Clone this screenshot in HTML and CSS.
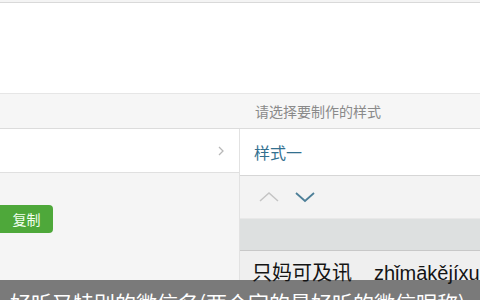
FILE: index.html
```html
<!DOCTYPE html>
<html lang="zh">
<head>
<meta charset="utf-8">
<link rel="stylesheet" href="styles.css">
</head>
<body>
<div class="page">
  <div class="topstrip"></div>
  <div class="blank"></div>
  <div class="bar">
    <div class="bar-left"></div>
    <div class="bar-right">请选择要制作的样式</div>
  </div>
  <div class="cols">
    <div class="col-left">
      <div class="row-select">
        <svg class="chev" width="8" height="12" viewBox="0 0 8 12"><path d="M2 2 L6 6 L2 10" fill="none" stroke="#b8b8b8" stroke-width="1.3"/></svg>
      </div>
      <div class="left-body">
        <button class="copy">复制</button>
      </div>
    </div>
    <div class="col-right">
      <div class="row-style">样式一</div>
      <div class="row-arrows">
        <svg width="20" height="12" viewBox="0 0 20 12"><path d="M1 10 L10 2 L19 10" fill="none" stroke="#c4c4c4" stroke-width="1.5"/></svg>
        <svg width="20" height="12" viewBox="0 0 20 12"><path d="M1 2 L10 10 L19 2" fill="none" stroke="#4d7f98" stroke-width="1.8"/></svg>
      </div>
      <div class="row-band"></div>
      <div class="row-light"></div>
    </div>
  </div>
  <div class="caption">好听又特别的微信名(两个字的最好听的微信昵称)</div>
  <div class="watermark">只妈可及讯<span class="pinyin">zhǐmākějíxun</span></div>
</div>
</body>
</html>
```

FILE: styles.css
```css
html, body {
  margin: 0;
  padding: 0;
}
body {
  font-family: "Noto Sans CJK SC", "Noto Sans", sans-serif;
  background: #fff;
}
.page {
  position: relative;
  width: 480px;
  height: 300px;
  overflow: hidden;
  display: flex;
  flex-direction: column;
}
.topstrip {
  height: 2px;
  background: #f4f4f4;
  border-bottom: 1px solid #d9d9d9;
  flex: none;
}
.blank {
  height: 90px;
  flex: none;
  background: #fff;
  border-bottom: 1px solid #e6e6e6;
}
.bar {
  flex: none;
  height: 34px;
  background: #f6f6f6;
  border-bottom: 1px solid #dcdcdc;
  display: grid;
  grid-template-columns: 240px 240px;
}
.bar-right {
  padding-left: 15px;
  font-size: 14px;
  line-height: 34px;
  color: #8a8a8a;
}
.cols {
  flex: 1;
  display: grid;
  grid-template-columns: 240px 240px;
}
.col-left {
  display: flex;
  flex-direction: column;
  border-right: 1px solid #e2e2e2;
}
.row-select {
  height: 43px;
  flex: none;
  background: #fff;
  border-bottom: 1px solid #e0e0e0;
  display: flex;
  align-items: center;
  justify-content: flex-end;
  padding-right: 14px;
}
.chev {
  display: block;
}
.left-body {
  flex: 1;
  background: #f5f5f5;
  padding-top: 32px;
}
.copy {
  display: block;
  margin-left: -16px;
  width: 69px;
  height: 28px;
  border: none;
  border-radius: 4px;
  background: #4ea83a;
  color: #f2fff0;
  font-family: "Noto Sans CJK SC", sans-serif;
  font-size: 14px;
  padding: 0 0 0 16px;
  line-height: 28px;
}
.col-right {
  display: flex;
  flex-direction: column;
}
.row-style {
  height: 46px;
  flex: none;
  background: #fff;
  border-bottom: 1px solid #d6d6d6;
  padding-left: 14px;
  font-size: 16px;
  line-height: 46px;
  color: #32708f;
}
.row-arrows {
  height: 42px;
  flex: none;
  background: #f3f3f3;
  display: flex;
  align-items: center;
  gap: 16px;
  padding-left: 19px;
  border-bottom: 1px solid #e8e8e8;
}
.row-arrows svg {
  display: block;
}
.row-band {
  height: 31px;
  flex: none;
  background: #dde0e0;
  border-bottom: 1px solid #c8c8c8;
}
.row-light {
  flex: 1;
  background: #efefef;
}
.caption {
  position: absolute;
  left: 0;
  right: 0;
  top: 280px;
  height: 20px;
  background: #7a7a7a;
  color: #fff;
  font-size: 21px;
  line-height: 44px;
  padding-left: 10px;
  white-space: nowrap;
  overflow: hidden;
  box-sizing: border-box;
}
.watermark {
  position: absolute;
  left: 252px;
  top: 257px;
  font-size: 20px;
  line-height: 30px;
  color: #141414;
  white-space: nowrap;
}
.pinyin {
  margin-left: 22px;
  font-family: "Liberation Sans", sans-serif;
  font-size: 20px;
}
```
